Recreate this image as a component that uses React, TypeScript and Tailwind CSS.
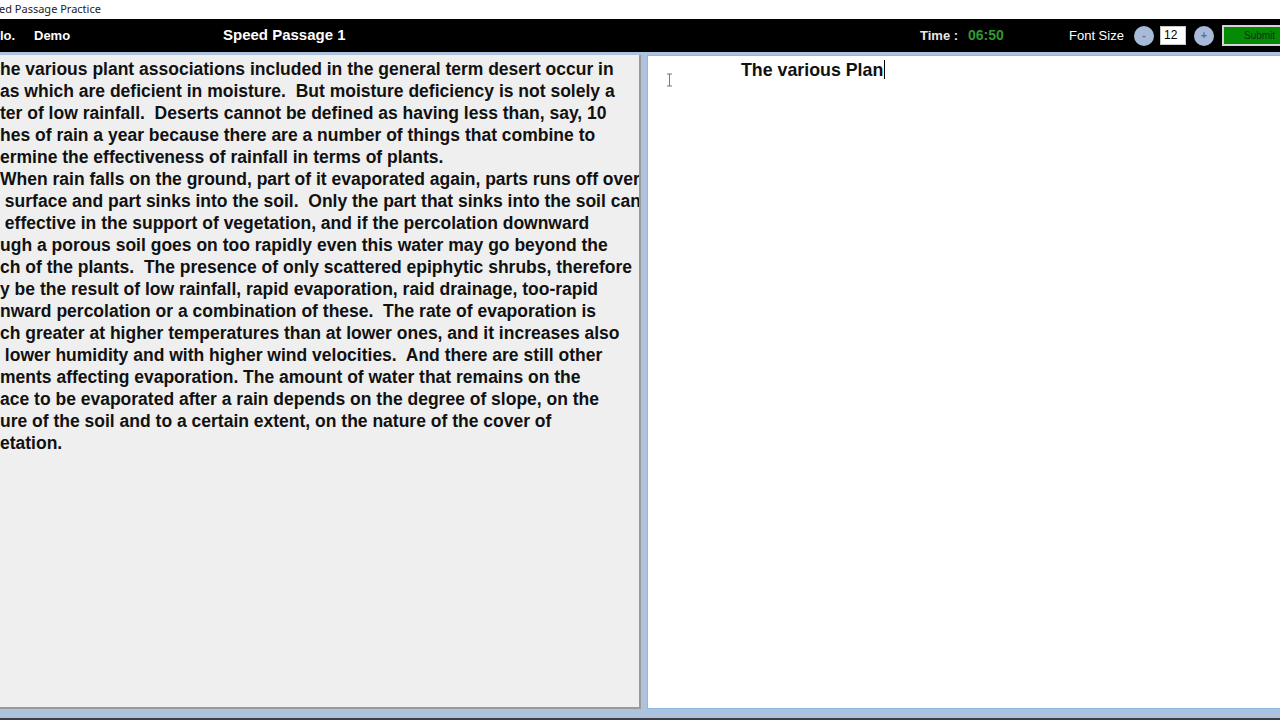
import React from "react";

const lines = [
  "he various plant associations included in the general term desert occur in",
  "as which are deficient in moisture.  But moisture deficiency is not solely a",
  "ter of low rainfall.  Deserts cannot be defined as having less than, say, 10",
  "hes of rain a year because there are a number of things that combine to",
  "ermine the effectiveness of rainfall in terms of plants.",
  "When rain falls on the ground, part of it evaporated again, parts runs off over",
  " surface and part sinks into the soil.  Only the part that sinks into the soil can",
  " effective in the support of vegetation, and if the percolation downward",
  "ugh a porous soil goes on too rapidly even this water may go beyond the",
  "ch of the plants.  The presence of only scattered epiphytic shrubs, therefore",
  "y be the result of low rainfall, rapid evaporation, raid drainage, too-rapid",
  "nward percolation or a combination of these.  The rate of evaporation is",
  "ch greater at higher temperatures than at lower ones, and it increases also",
  " lower humidity and with higher wind velocities.  And there are still other",
  "ments affecting evaporation. The amount of water that remains on the",
  "ace to be evaporated after a rain depends on the degree of slope, on the",
  "ure of the soil and to a certain extent, on the nature of the cover of",
  "etation.",
];

export default function App() {
  return (
    <div className="w-[1280px] h-[720px] overflow-hidden flex flex-col bg-white" style={{ fontFamily: '"Liberation Sans", Arial, sans-serif' }}>
      {/* title bar */}
      <div className="h-[19px] flex items-center bg-white text-[11px] text-[#222]" style={{ fontFamily: '"Noto Sans", sans-serif' }}>
        <span className="-ml-[1px]">ed Passage Practice</span>
      </div>
      {/* black bar */}
      <div className="h-[33px] bg-black flex items-center overflow-hidden whitespace-nowrap">
        <div className="w-[34px] shrink-0 text-white font-bold text-[13px]">lo.</div>
        <div className="w-[188px] shrink-0 text-white font-bold text-[13px]">Demo</div>
        <div className="w-[698px] shrink-0 text-white font-bold text-[15px] pl-[1px]">Speed Passage 1</div>
        <div className="w-[48px] shrink-0 text-[#e8e8e8] font-bold text-[13px]">Time :</div>
        <div className="w-[101px] shrink-0 text-[#2f9a2f] font-bold text-[14px]">06:50</div>
        <div className="w-[65px] shrink-0 text-white text-[13px]">Font Size</div>
        <div className="w-[20px] h-[20px] shrink-0 rounded-full bg-[#a7bbd9] flex items-center justify-center text-[#5a6e90] text-[11px] font-bold leading-none">-</div>
        <div className="ml-[6px] w-[26px] h-[19px] shrink-0 bg-white text-black text-[12px] leading-[17px] pl-[3px] border border-[#c8c8c8]">12</div>
        <div className="ml-[8px] w-[20px] h-[20px] shrink-0 rounded-full bg-[#a7bbd9] flex items-center justify-center text-[#5a6e90] text-[11px] font-bold leading-none">+</div>
        <div className="ml-[8px] w-[58px] h-[21px] shrink-0 border-2 border-r-0 border-[#d4d4d4] bg-[#058a05] text-[#123312] text-[10px] leading-[17px] pl-[20px]">Submit</div>
      </div>
      {/* main area */}
      <div className="flex-1 bg-[#adc2dc] pt-[3px] pb-[9px] flex">
        <div className="w-[641px] h-full shrink-0 bg-[#efefef] border-r-2 border-b-2 border-[#9a9a9a] overflow-hidden pt-[3px]">
          {lines.map((l, i) => (
            <div key={i} className="text-[17.5px] font-bold leading-[22px] text-[#111] whitespace-pre">
              {l}
            </div>
          ))}
        </div>
        <div className="ml-[6px] flex-1 h-full bg-white border-l border-t border-b border-[#8db8e6] relative pt-[4px]">
          <div className="pl-[93px] text-[17.8px] font-bold leading-[18px] text-[#111] flex items-center">
            <span>The various Plan</span>
            <span className="inline-block w-[1px] h-[19px] bg-black ml-[1px]" />
          </div>
          <svg className="absolute left-[18px] top-[17px]" width="7" height="14" viewBox="0 0 7 14">
            <path d="M1 1 H6 M3.5 1 V13 M1 13 H6" stroke="#777" strokeWidth="1" fill="none" />
          </svg>
        </div>
      </div>
      <div className="h-[2px] bg-[#3a3f48]" />
    </div>
  );
}
